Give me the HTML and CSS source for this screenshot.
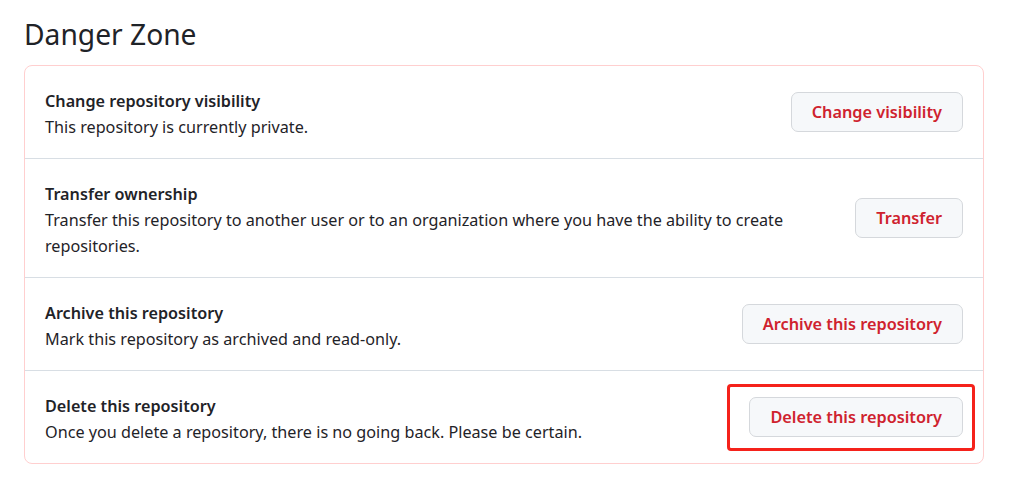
FILE: index.html
```html
<!DOCTYPE html>
<html lang="en">
<head>
<meta charset="utf-8">
<title>Danger Zone</title>
<link rel="stylesheet" href="styles.css">
</head>
<body>
<main class="page">
  <h2 class="subhead">Danger Zone</h2>
  <div class="danger-box">
    <div class="row">
      <div class="info">
        <strong class="title">Change repository visibility</strong>
        <p class="desc">This repository is currently private.</p>
      </div>
      <button class="btn-danger" type="button">Change visibility</button>
    </div>
    <div class="row">
      <div class="info">
        <strong class="title">Transfer ownership</strong>
        <p class="desc">Transfer this repository to another user or to an organization where you have the ability to create repositories.</p>
      </div>
      <button class="btn-danger" type="button">Transfer</button>
    </div>
    <div class="row">
      <div class="info">
        <strong class="title">Archive this repository</strong>
        <p class="desc">Mark this repository as archived and read-only.</p>
      </div>
      <button class="btn-danger" type="button">Archive this repository</button>
    </div>
    <div class="row">
      <div class="info">
        <strong class="title">Delete this repository</strong>
        <p class="desc">Once you delete a repository, there is no going back. Please be certain.</p>
      </div>
      <span class="highlight">
        <button class="btn-danger" type="button">Delete this repository</button>
      </span>
    </div>
  </div>
</main>
</body>
</html>
```

FILE: styles.css
```css
* { box-sizing: border-box; }

html, body {
  margin: 0;
  padding: 0;
  background: #ffffff;
}

body {
  font-family: "Noto Sans", "Open Sans", sans-serif;
  color: #1f2328;
  font-size: 16.2px;
  line-height: 26px;
}

.page {
  padding: 12px 36px 0 24px;
}

.subhead {
  margin: 0 0 8px 0;
  font-size: 28.2px;
  font-weight: 400;
  line-height: 45px;
  color: #1f2328;
}

.danger-box {
  border: 1px solid #ffcfcf;
  border-radius: 8px;
  background: #fff;
}

.row {
  display: flex;
  align-items: center;
  gap: 20px;
  padding: 20px 20px;
  border-top: 1px solid #d8dee4;
}

.row:first-child {
  border-top: none;
}

.info {
  flex: 1 1 auto;
  min-width: 0;
  padding-top: 2px;
  margin-bottom: -2px;
}

.title {
  display: block;
  font-weight: 600;
}

.desc {
  margin: 0;
}

.btn-danger {
  flex: none;
  font-family: inherit;
  font-size: 16.3px;
  font-weight: 600;
  line-height: 1;
  height: 40px;
  padding: 0 20px;
  color: #cf222e;
  background: #f6f8fa;
  border: 1px solid #d5d8dc;
  border-radius: 7px;
  cursor: pointer;
}

.highlight {
  position: relative;
  flex: none;
  display: inline-flex;
}

.highlight::after {
  content: "";
  position: absolute;
  top: -13px;
  bottom: -14px;
  left: -22px;
  right: -12px;
  border: 3px solid #f5221b;
  border-radius: 4px;
  pointer-events: none;
}
```
